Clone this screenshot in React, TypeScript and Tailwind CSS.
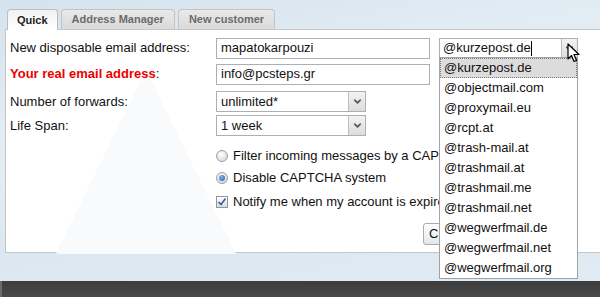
import { ChevronDown } from "lucide-react"

const domains = [
  "@kurzepost.de",
  "@objectmail.com",
  "@proxymail.eu",
  "@rcpt.at",
  "@trash-mail.at",
  "@trashmail.at",
  "@trashmail.me",
  "@trashmail.net",
  "@wegwerfmail.de",
  "@wegwerfmail.net",
  "@wegwerfmail.org",
]

function Tab({ label, active }: { label: string; active?: boolean }) {
  return (
    <div
      className={
        active
          ? "h-[21px] px-[9px] flex items-center rounded-t-[4px] border border-b-0 border-[#bdbdbd] bg-[linear-gradient(#f1f1f1,#ffffff)] text-[11px] font-bold text-[#222] relative z-10 -mb-px"
          : "h-[20px] px-[10px] flex items-center rounded-t-[4px] border border-b-0 border-[#c4c4c4] bg-[linear-gradient(#e9e9e9,#dadada)] text-[11px] font-bold text-[#6b6b6b]"
      }
    >
      {label}
    </div>
  )
}

function Select({ value }: { value: string }) {
  return (
    <div className="w-[150px] h-[21px] flex border border-[#a9b0b8] bg-white">
      <div className="flex-1 pl-[4px] flex items-center text-[13px] text-[#111]">{value}</div>
      <div className="w-[17px] border-l border-[#bcbcbc] bg-[linear-gradient(#f3f3f3,#dcdcdc)] flex items-center justify-center">
        <ChevronDown size={11} strokeWidth={3.5} className="text-[#555]" />
      </div>
    </div>
  )
}

function Radio({ checked }: { checked?: boolean }) {
  return (
    <div className="w-[12px] h-[12px] rounded-full border border-[#9aa0a6] bg-[radial-gradient(circle_at_40%_35%,#ffffff,#d0d0d0)] flex items-center justify-center">
      {checked && <div className="w-[6px] h-[6px] rounded-full bg-[radial-gradient(circle_at_40%_35%,#7fb6ea,#1b5fa8)]" />}
    </div>
  )
}

export default function App() {
  return (
    <div
      className="w-[600px] h-[297px] overflow-hidden relative flex flex-col bg-[linear-gradient(168deg,#d4e3ee_0%,#e4edf4_35%,#dbe8f1_60%,#e1ebf3_100%)]"
      style={{ fontFamily: '"Liberation Sans", Arial, sans-serif' }}
    >
      <div className="h-[29px] pl-[7px] pt-[9px] flex items-end gap-[3px]">
        <Tab label="Quick" active />
        <Tab label="Address Manager" />
        <Tab label="New customer" />
      </div>

      <div className="ml-[5px] w-[620px] h-[224px] border border-[#c6c6c6] bg-white relative text-[13px] text-[#111]">
        <svg className="absolute left-[45px] top-[40px]" width="185" height="184" viewBox="0 0 185 184">
          <polygon points="95,0 185,184 5,184" fill="#f9fafb" />
        </svg>
        <div className="relative pl-[4px] pt-[7px] flex flex-col">
          <div className="h-[22px] flex items-center">
            <div className="w-[206px]">New disposable email address:</div>
            <div className="w-[214px] h-[21px] border border-[#a9b0b8] bg-white pl-[4px] flex items-center">mapatokarpouzi</div>
            <div className="ml-[9px] w-[139px] h-[21px] flex border border-[#a9b0b8] bg-white">
              <div className="flex-1 pl-[3px] flex items-center">
                @kurzepost.de<span className="w-px h-[15px] bg-black" />
              </div>
              <div className="w-[16px] border-l border-[#bcbcbc] bg-[linear-gradient(#f3f3f3,#dcdcdc)] flex items-center justify-center">
                <ChevronDown size={11} strokeWidth={3.5} className="text-[#555]" />
              </div>
            </div>
          </div>
          <div className="mt-[4px] h-[22px] flex items-center">
            <div className="w-[206px]">
              <span className="font-bold text-[#ee0000]">Your real email address</span>:
            </div>
            <div className="w-[214px] h-[21px] border border-[#a9b0b8] bg-white pl-[4px] flex items-center">info@pcsteps.gr</div>
          </div>
          <div className="mt-[6px] h-[21px] flex items-center">
            <div className="w-[206px]">Number of forwards:</div>
            <Select value="unlimited*" />
          </div>
          <div className="mt-[3px] h-[21px] flex items-center">
            <div className="w-[206px]">Life Span:</div>
            <Select value="1 week" />
          </div>
          <div className="mt-[9px] pl-[206px] h-[22px] flex items-center gap-[5px]">
            <Radio />
            <span className="whitespace-nowrap">Filter incoming messages by a CAPTCHA</span>
          </div>
          <div className="pl-[206px] h-[22px] flex items-center gap-[5px]">
            <Radio checked />
            <span>Disable CAPTCHA system</span>
          </div>
          <div className="mt-[2px] pl-[206px] h-[22px] flex items-center gap-[5px]">
            <div className="w-[12px] h-[12px] border border-[#8f969d] bg-[linear-gradient(#ffffff,#dcdcdc)] flex items-center justify-center">
              <svg width="10" height="10" viewBox="0 0 10 10">
                <path d="M1.5 5 L4 7.5 L8.5 1.5" fill="none" stroke="#2f5fa8" strokeWidth="1.6" />
              </svg>
            </div>
            <span className="whitespace-nowrap">Notify me when my account is expired</span>
          </div>
          <div className="mt-[10px] pl-[413px] flex gap-[6px]">
            <div className="h-[22px] px-[5px] flex items-center rounded-[3px] border border-[#aaaaaa] bg-[linear-gradient(#ffffff,#e6e6e6)]">Create</div>
            <div className="h-[22px] w-[80px] px-[6px] flex items-center justify-end rounded-[3px] border border-[#aaaaaa] bg-[linear-gradient(#ffffff,#e6e6e6)]">Options</div>
          </div>
        </div>
      </div>

      <div className="flex-1" />
      <div className="h-[16px] bg-[linear-gradient(#3c3c3c,#4a4a4a)] border-l-[2px] border-[#6a6a6a]" />

      <div className="absolute left-[439px] top-[57px] w-[139px] border border-[#9ea3a8] bg-white text-[13px] text-[#111] flex flex-col">
        {domains.map((d, i) => (
          <div
            key={d}
            className={
              i === 0
                ? "h-[20px] pl-[3px] flex items-center bg-[#dcdcdc] border border-dotted border-[#777]"
                : "h-[20px] pl-[4px] flex items-center"
            }
          >
            {d}
          </div>
        ))}
      </div>

      <svg className="absolute left-[567px] top-[43px]" width="14" height="21" viewBox="0 0 14 21">
        <path d="M1 1 L1 16 L4.5 12.5 L7 18.5 L9.5 17.5 L7 11.5 L12 11.5 Z" fill="#fff" stroke="#000" strokeWidth="1.2" strokeLinejoin="round" />
      </svg>
    </div>
  )
}
